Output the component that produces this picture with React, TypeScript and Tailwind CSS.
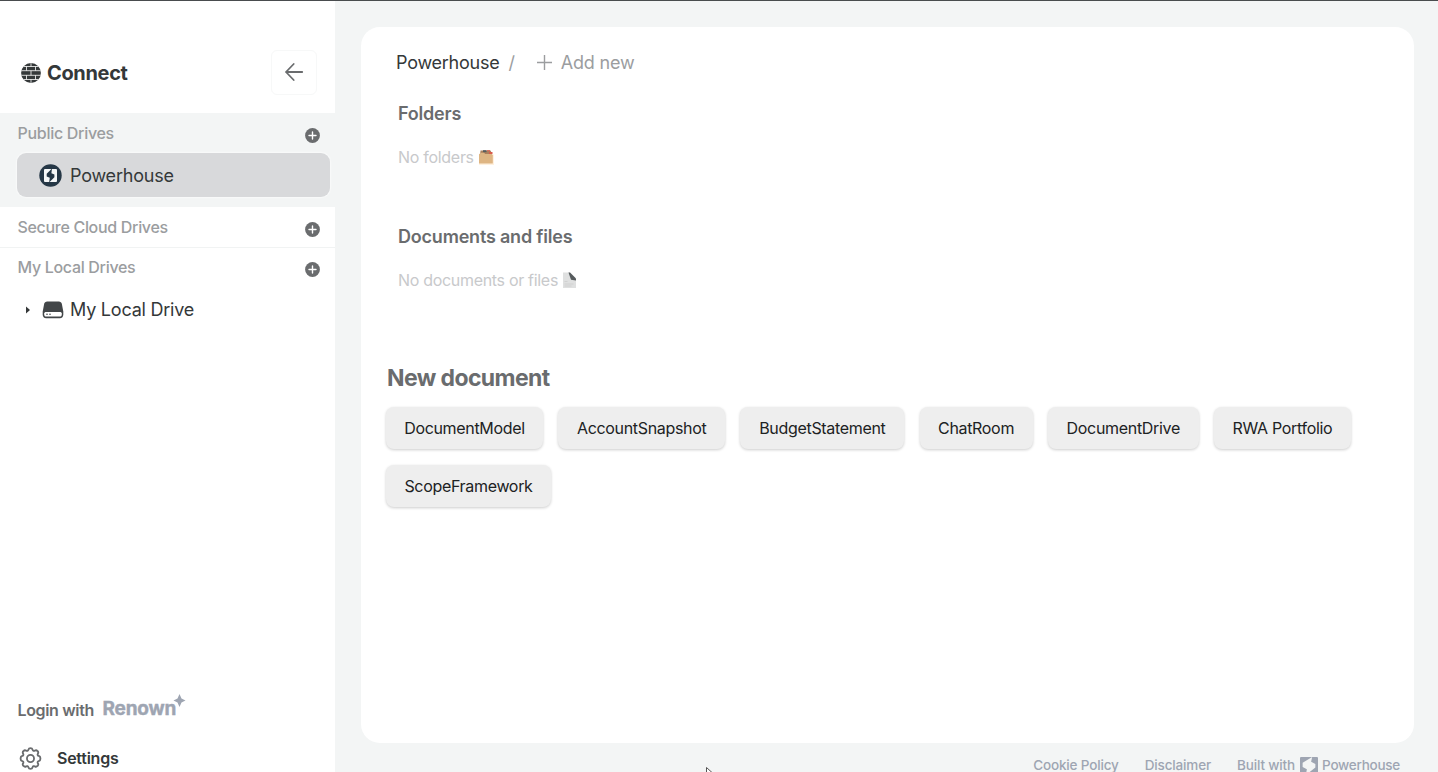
import React from "react";

const documentTypes = [
  { name: "DocumentModel", width: "w-[157px]" },
  { name: "AccountSnapshot", width: "w-[167px]" },
  { name: "BudgetStatement", width: "w-[164px]" },
  { name: "ChatRoom", width: "w-[113px]" },
  { name: "DocumentDrive", width: "w-[151px]" },
  { name: "RWA Portfolio", width: "w-[137px]" },
  { name: "ScopeFramework", width: "w-[165px]" },
];

function PlusBadge() {
  return (
    <svg width="15" height="15" viewBox="0 0 15 15" className="mt-1 shrink-0">
      <circle cx="7.5" cy="7.5" r="7.4" fill="#6a6c6e" />
      <path d="M7.5 4v7M4 7.5h7" stroke="#fff" strokeWidth="1.4" strokeLinecap="round" />
    </svg>
  );
}

function ConnectMark() {
  return (
    <svg width="20" height="20" viewBox="0 0 20 20" className="shrink-0">
      <defs>
        <clipPath id="globe">
          <circle cx="10" cy="10" r="9.9" />
        </clipPath>
      </defs>
      <g clipPath="url(#globe)">
        <rect width="20" height="20" fill="#343839" />
        <path
          d="M0 3.500h20M0 7.700h20M0 12.300h20M0 16.500h20M10 0v3.500M5.500 3.500v4.200M14.500 3.500v4.200M10 7.700v4.600M5.500 12.300v4.200M14.500 12.300v4.200M10 16.500v3.500"
          stroke="#fff"
          strokeWidth=".8"
        />
      </g>
    </svg>
  );
}

function PowerhouseBadge() {
  return (
    <svg width="23" height="23" viewBox="0 0 23 23" className="shrink-0">
      <circle cx="11.5" cy="11.5" r="11.2" fill="#253746" />
      <rect x="5" y="5" width="13" height="13" rx="1" fill="#f5f7f8" />
      <path d="M13 4.500 7.700 9.800v2.700l3.100 1.300-.7 4.700 5.300-5.300v-2.700l-3-1.300z" fill="#253746" />
    </svg>
  );
}

function DriveIcon() {
  return (
    <svg width="22" height="18" viewBox="0 0 22 18" className="shrink-0">
      <path d="M5.200.6h11.600c1.700 0 2.700.9 3.100 2.500l1.400 7.400v3c0 2.200-1.300 3.700-3.500 3.700H4.200C2 17.200.7 15.700.7 13.500v-3l1.400-7.400C2.500 1.500 3.500.6 5.200.6z" fill="#424648" />
      <path d="M2.200 12.300c.3-.8 1-1.200 1.900-1.200h13.800c.9 0 1.600.4 1.900 1.200v1.200c0 1.300-.7 2.100-1.900 2.100H4.100c-1.200 0-1.900-.8-1.900-2.100z" fill="#fff" />
      <circle cx="5" cy="13.300" r=".8" fill="#424648" />
      <circle cx="8" cy="13.300" r=".8" fill="#424648" />
    </svg>
  );
}

function GearIcon() {
  return (
    <svg width="23" height="23" viewBox="0 0 24 24" fill="none" stroke="#6a6c6e" strokeWidth="1.9" strokeLinejoin="round" className="shrink-0">
      <path d="M12 1.200c1.400 0 1.900.5 2.200 1.700.3 1.100 1.300 1.500 2.300.9 1.100-.7 1.900-.6 2.800.4 1 .9 1.100 1.700.4 2.800-.6 1-.2 2 .9 2.300 1.200.3 1.700.9 1.700 2.200v1c0 1.300-.5 1.900-1.700 2.200-1.100.3-1.500 1.300-.9 2.300.7 1.100.6 1.900-.4 2.800-.9 1-1.700 1.100-2.800.4-1-.6-2-.2-2.300.9-.3 1.200-.8 1.700-2.200 1.700s-1.900-.5-2.200-1.700c-.3-1.100-1.300-1.500-2.300-.9-1.100.7-1.900.6-2.800-.4-1-.9-1.100-1.700-.4-2.800.6-1 .2-2-.9-2.300-1.200-.3-1.700-.9-1.700-2.200v-1c0-1.300.5-1.900 1.700-2.200 1.100-.3 1.500-1.300.9-2.300-.7-1.100-.6-1.900.4-2.800.9-1 1.700-1.100 2.800-.4 1 .6 2 .2 2.300-.9.300-1.200.800-1.700 2.200-1.700z" />
      <circle cx="12" cy="12" r="3.700" />
    </svg>
  );
}

function FolderEmoji() {
  return (
    <svg width="17" height="16" viewBox="0 0 17 16" className="ml-[4px] shrink-0">
      <path d="M1 5.500h15V16H1z" fill="#fff1df" />
      <path d="M2.500 1.500h10l1.500 3v2h-12z" fill="#a9805d" />
      <path d="M5 1.200h3.500v2H5z" fill="#555b5d" />
      <path d="M9 1.200h3v1H9zM11 3h3.500v2H11z" fill="#d85b4b" />
      <path d="M1 5.200 3 3.700h3l1.200 1.200h6.600l1 1V14.500H1z" fill="#deb583" />
    </svg>
  );
}

function PageEmoji() {
  return (
    <svg width="15" height="17" viewBox="0 0 15 17" className="ml-[4px] shrink-0">
      <path d="M1 .500h7l6 6v9.500H1z" fill="#dfe0e0" />
      <path d="M6.500 .500h1.500l6 6v2l-5-.800z" fill="#565b5d" />
      <path d="M2.500 9.500h3M2.500 12h9M2.500 14h7" stroke="#cbcdcd" strokeWidth=".8" />
    </svg>
  );
}

function Sidebar() {
  return (
    <aside className="flex w-[335px] shrink-0 flex-col bg-white">
      <header className="flex h-[112px] shrink-0 items-center justify-between pr-[18px] pl-[21px] pt-[30px]">
        <div className="flex items-center gap-[6px] pt-px">
          <ConnectMark />
          <span className="text-[20px] leading-none font-bold tracking-[-0.35px] text-[#343839]">Connect</span>
        </div>
        <button className="flex h-[45px] w-[46px] items-center justify-center rounded-md border border-[#f7f8f8]">
          <svg width="20" height="20" viewBox="0 0 20 20" fill="none" stroke="#6a6c6e" strokeWidth="1.8" strokeLinecap="round" strokeLinejoin="round">
            <path d="M18.200 10H2M9.700 2 2 10l7.700 8" />
          </svg>
        </button>
      </header>
      <section className="h-[94px] shrink-0 bg-[#f3f5f5]">
        <div className="flex h-[40px] items-center justify-between pr-[15px] pl-[17.5px]">
          <h2 className="text-[16px] font-medium tracking-[-0.29px] text-[#9b9d9f]">Public Drives</h2>
          <PlusBadge />
        </div>
        <div className="ml-[17px] flex h-[44px] w-[313px] items-center gap-[8px] rounded-[9px] bg-[#d8d9db] pl-[22px] shadow-[0_0_1px_1px_#f9fafa]">
          <PowerhouseBadge />
          <span className="text-[18px] tracking-[-0.22px] text-[#343839]">Powerhouse</span>
        </div>
      </section>
      <section className="flex h-[41px] shrink-0 items-center justify-between border-b border-[#f1f3f3] pr-[15px] pl-[17.5px]">
        <h2 className="text-[16px] font-medium tracking-[-0.31px] text-[#9b9d9f]">Secure Cloud Drives</h2>
        <PlusBadge />
      </section>
      <section>
        <div className="flex h-[39px] items-center justify-between pr-[15px] pl-[17.5px]">
          <h2 className="pb-px text-[16px] font-medium tracking-[-0.31px] text-[#9b9d9f]">My Local Drives</h2>
          <PlusBadge />
        </div>
        <div className="flex h-[45px] items-center pl-[25px]">
          <svg width="6" height="8" viewBox="0 0 6 8" className="mr-[11px]">
            <path d="M1 .5 5 4 1 7.500z" fill="#343839" />
          </svg>
          <DriveIcon />
          <span className="ml-[6px] text-[18px] tracking-[-0.22px] text-[#343839]">My Local Drive</span>
        </div>
      </section>
      <footer className="mt-auto shrink-0">
        <div className="mb-[11px] flex h-[48px] items-center pl-[17.5px]">
          <span className="pt-px text-[16px] font-semibold tracking-[-0.34px] text-[#6a6c6e]">Login with</span>
          <span className="ml-[8.5px] text-[19px] font-bold tracking-[-0.2px] text-[#9ea5b2] [-webkit-text-stroke:0.4px_#9ea5b2]">Renown</span>
          <svg width="13" height="13" viewBox="0 0 12 13" className="-ml-[3px] mb-[18px]">
            <path d="M6 0 8 4.500 12 6.500 8 8.500 6 13 4 8.500 0 6.500 4 4.500z" fill="#9ea5b2" />
          </svg>
        </div>
        <div className="flex h-[28px] items-center gap-[15px] pl-[19px]">
          <GearIcon />
          <span className="text-[16px] font-semibold tracking-[-0.25px] text-[#343839]">Settings</span>
        </div>
      </footer>
    </aside>
  );
}

export default function App() {
  return (
    <div className="relative flex h-[772px] w-[1438px] overflow-hidden border-t border-[#494c4e] bg-[#f3f5f5] font-['Inter',sans-serif]">
      <Sidebar />
      <main className="flex min-w-0 flex-1 flex-col pt-[26px] pr-[24px] pl-[26px]">
        <div className="h-[716px] shrink-0 rounded-[19px] bg-white pt-[16px] pr-[20px] pl-[25px]">
          <nav className="flex h-[38px] items-center pl-[10px] text-[18px] tracking-[-0.24px]">
            <span className="text-[#343839]">Powerhouse</span>
            <span className="ml-[9px] text-[#9b9d9f]">/</span>
            <button className="ml-[22px] flex items-center gap-[9px] tracking-[-0.2px] text-[#9b9d9f]">
              <svg width="15" height="15" viewBox="0 0 15 15">
                <path d="M7.500 0v15M0 7.500h15" stroke="#9b9d9f" strokeWidth="1.400" />
              </svg>
              Add new
            </button>
          </nav>
          <section className="h-[123px] pt-[19px] pl-[12px]">
            <h2 className="h-[28px] text-[18px] leading-[28px] font-semibold tracking-[-0.2px] text-[#6a6c6e]">Folders</h2>
            <p className="mt-[17px] flex h-[24px] items-center text-[16px] tracking-[-0.29px] text-[#c8c9cb]">
              No folders
              <FolderEmoji />
            </p>
          </section>
          <section className="h-[123px] pt-[19px] pl-[12px]">
            <h2 className="h-[28px] text-[18px] leading-[28px] font-semibold tracking-[-0.2px] text-[#6a6c6e]">Documents and files</h2>
            <p className="mt-[17px] flex h-[24px] items-center text-[16px] tracking-[-0.31px] text-[#c8c9cb]">
              No documents or files
              <PageEmoji />
            </p>
          </section>
          <section className="pt-[36px]">
            <h1 className="h-[30px] pl-px text-[23px] leading-[30px] font-bold tracking-[-0.6px] text-[#6a6c6e]">New document</h1>
            <div className="mt-[14px] flex flex-wrap gap-x-[15.2px] gap-y-[16px]">
              {documentTypes.map(({ name, width }) => (
                <button
                  key={name}
                  className={`${width} h-[42px] rounded-[8px] bg-[#eee] pb-px text-center text-[16px] tracking-[-0.32px] whitespace-nowrap text-[#202223] shadow-[0_1px_3px_rgba(0,0,0,0.2)]`}
                >
                  {name}
                </button>
              ))}
            </div>
          </section>
        </div>
        <footer className="flex h-[45px] shrink-0 items-center justify-end pr-[14px] text-[13.500px] font-medium tracking-[-0.15px] text-[#9ea5b2]">
          <span>Cookie Policy</span>
          <span className="ml-[26px]">Disclaimer</span>
          <span className="ml-[26px]">Built with</span>
          <svg width="18" height="18" viewBox="0 0 17 17" className="mr-[4px] ml-[5px]">
            <rect width="17" height="17" rx="1" fill="#9ea5b2" />
            <path d="M11.500 0 2.500 5.500v4L6.500 11.500 5.500 17l9-7V6.500L10.500 4.500z" fill="#f3f5f5" />
          </svg>
          <span className="tracking-[-0.25px]">Powerhouse</span>
        </footer>
      </main>
      <svg width="8" height="12" viewBox="0 0 8 12" className="absolute top-[766px] left-[705px]">
        <path d="M1.500.5v11L7 5.500z" fill="#fff" stroke="#555" strokeWidth="1" />
      </svg>
    </div>
  );
}
